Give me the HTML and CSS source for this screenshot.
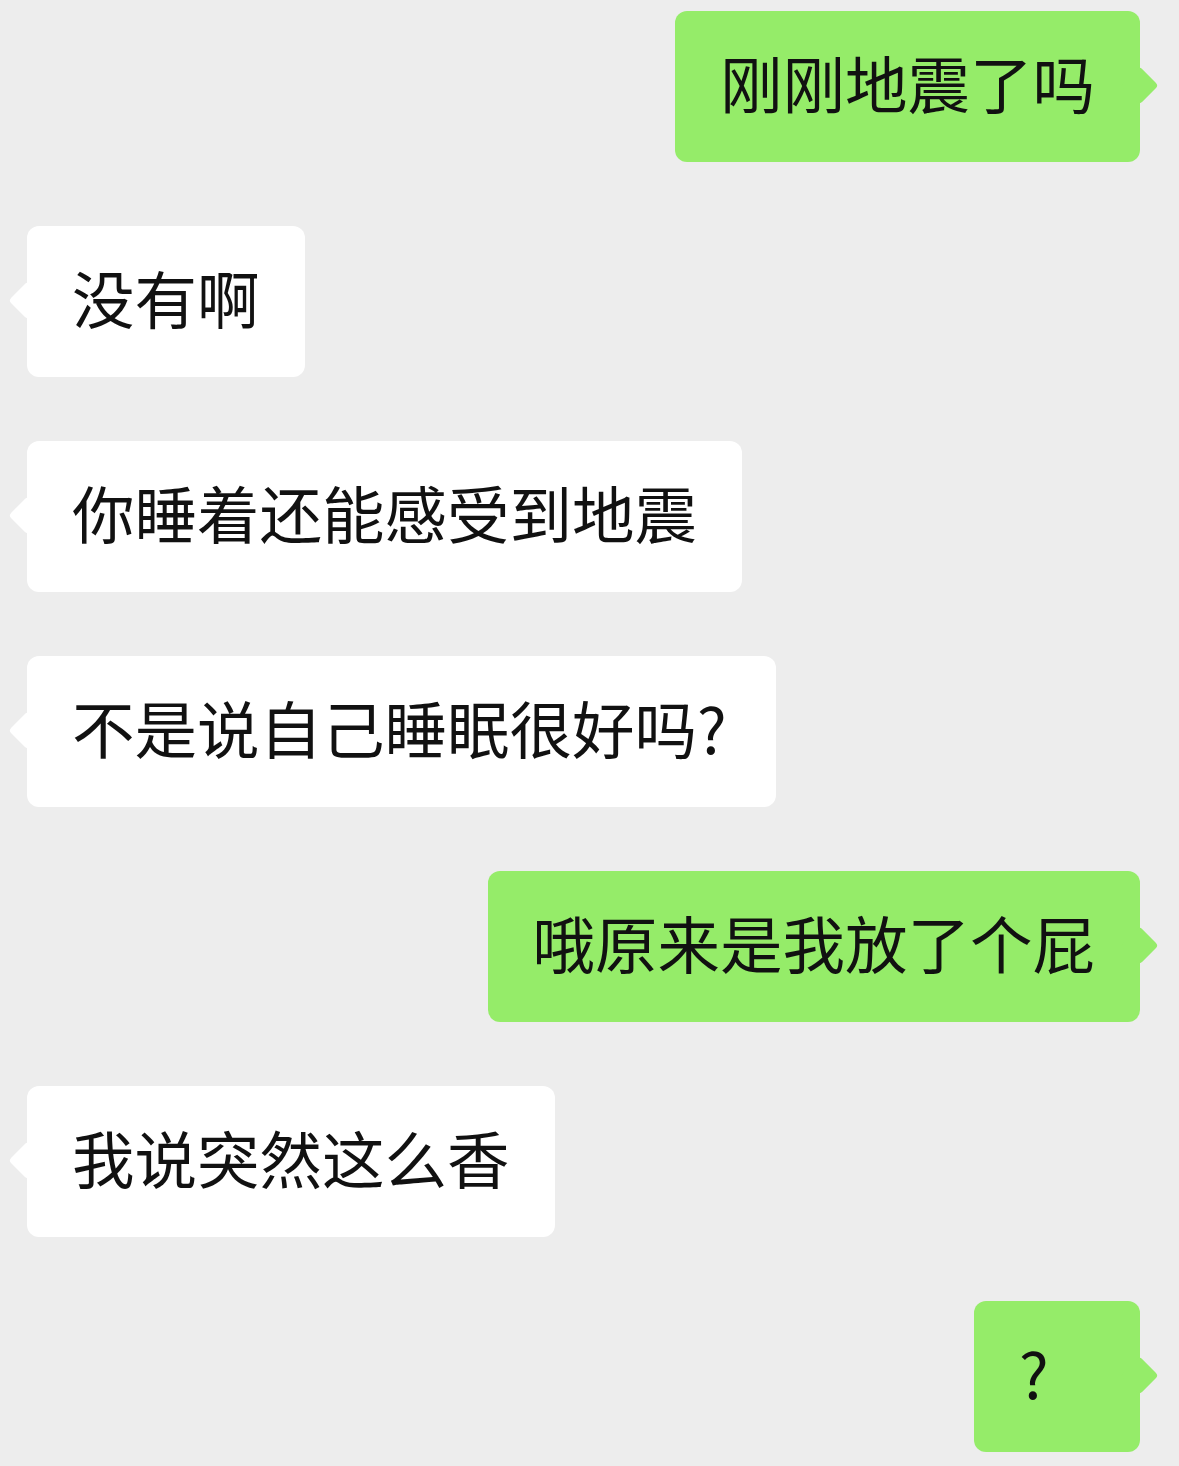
FILE: index.html
```html
<!DOCTYPE html>
<html lang="zh-CN">

<head>
    <meta charset="UTF-8">
    <meta name="viewport" content="width=device-width, initial-scale=1.0">
    <title>聊天记录</title>
    <link rel="stylesheet" href="styles.css">
</head>

<body>
    <main class="chat">
        <div class="msg mine">刚刚地震了吗</div>
        <div class="msg theirs">没有啊</div>
        <div class="msg theirs">你睡着还能感受到地震</div>
        <div class="msg theirs wide">不是说自己睡眠很好吗?</div>
        <div class="msg mine">哦原来是我放了个屁</div>
        <div class="msg theirs">我说突然这么香</div>
        <div class="msg mine">?</div>
    </main>
</body>

</html>
```

FILE: styles.css
```css
* {
    margin: 0;
    padding: 0;
    box-sizing: border-box;
}

body {
    background: #ededed;
    font-family: "Noto Sans CJK SC", "Noto Sans", sans-serif;
    color: #111;
}

.chat {
    display: flex;
    flex-direction: column;
    gap: 64px;
    padding: 11px 39px 14px 27px;
}

.msg {
    position: relative;
    min-width: 166px;
    padding: 39px 45px 49px;
    font-size: 62.5px;
    line-height: 63px;
    border-radius: 12px;
    white-space: nowrap;
}

.msg.wide {
    padding-right: 49px;
}

/* little tail pointing at the sender */
.msg::after {
    content: "";
    position: absolute;
    top: 50%;
    width: 27px;
    height: 27px;
    margin-top: -15px;
    border-radius: 4px;
    transform: rotate(45deg);
}

.mine {
    align-self: flex-end;
    background: #95ec69;
}

.mine::after {
    right: -13px;
    background: #95ec69;
}

.theirs {
    align-self: flex-start;
    background: #fff;
}

.theirs::after {
    left: -13px;
    background: #fff;
}
```
